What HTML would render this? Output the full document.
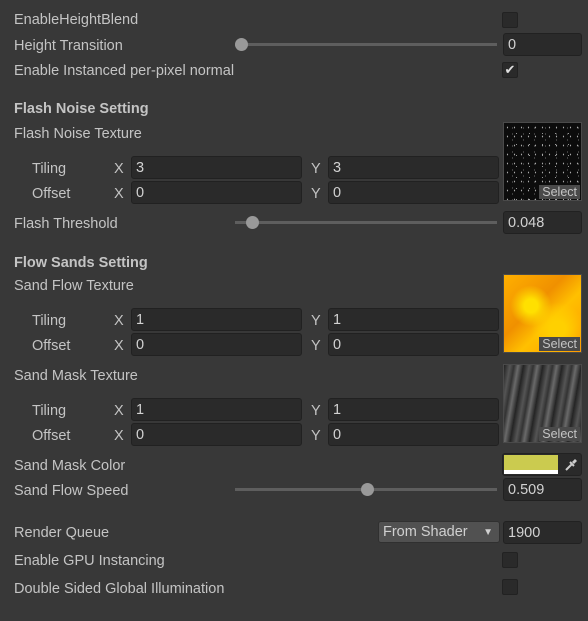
<!DOCTYPE html><html><head><style>
body{margin:0;width:588px;height:621px;background:#383838;overflow:hidden;font-family:"Liberation Sans",sans-serif;font-size:14.5px;color:#c4c4c4;position:relative}
.a{position:absolute;line-height:22px;white-space:nowrap}
.b{font-weight:bold}
.f{position:absolute;background:#2a2a2a;border:1px solid #212121;border-radius:3px;box-sizing:border-box;height:23px;line-height:23px;padding-left:4px;color:#d2d2d2}
.cb{position:absolute;width:16px;height:16px;background:#2a2a2a;border:1px solid #222;border-radius:2px;box-sizing:border-box;left:502px}
.tr{position:absolute;height:3px;background:#5e5e5e;left:235px;width:262px}
.th{position:absolute;width:13px;height:13px;border-radius:50%;background:#999}
.tex{position:absolute;left:503px;width:79px;height:79px;border:1px solid #4a4a4a;box-sizing:border-box;background:#222;overflow:hidden}
.sel{position:absolute;right:1px;bottom:1px;background:#4a4a4a;color:#c4c4c4;font-size:12.5px;line-height:14px;padding:0 3px}
</style></head><body>
<div class="a" style="left:14px;top:9px">EnableHeightBlend</div>
<div class="cb" style="top:12px"></div>
<div class="a" style="left:14px;top:35px">Height Transition</div>
<div class="tr" style="top:43px"></div><div class="th" style="left:235px;top:38px"></div>
<div class="f" style="left:503px;top:33px;width:79px">0</div>
<div class="a" style="left:14px;top:60px">Enable Instanced per-pixel normal</div>
<div class="cb" style="top:62px;color:#e0e0e0;font-size:13px;line-height:14px;text-align:center">✔</div>

<div class="a b" style="left:14px;top:98px">Flash Noise Setting</div>
<div class="a" style="left:14px;top:123px">Flash Noise Texture</div>
<div class="tex" style="top:122px;background:#0c0c0c;background-image:radial-gradient(#aaa 0.5px,transparent 0.8px),radial-gradient(#777 0.5px,transparent 0.8px),radial-gradient(#999 0.5px,transparent 0.8px);background-size:7px 9px,11px 6px,13px 11px;background-position:0 0,3px 2px,6px 5px"><div class="sel">Select</div></div>
<div class="a" style="left:32px;top:158px">Tiling</div><div class="a" style="left:114px;top:158px">X</div>
<div class="f" style="left:131px;top:156px;width:171px">3</div><div class="a" style="left:311px;top:158px">Y</div>
<div class="f" style="left:328px;top:156px;width:171px">3</div>
<div class="a" style="left:32px;top:183px">Offset</div><div class="a" style="left:114px;top:183px">X</div>
<div class="f" style="left:131px;top:181px;width:171px">0</div><div class="a" style="left:311px;top:183px">Y</div>
<div class="f" style="left:328px;top:181px;width:171px">0</div>
<div class="a" style="left:14px;top:213px">Flash Threshold</div>
<div class="tr" style="top:221px"></div><div class="th" style="left:246px;top:216px"></div>
<div class="f" style="left:503px;top:211px;width:79px">0.048</div>

<div class="a b" style="left:14px;top:252px">Flow Sands Setting</div>
<div class="a" style="left:14px;top:275px">Sand Flow Texture</div>
<div class="tex" style="top:274px;background:radial-gradient(circle at 35% 40%,#ffe000 10%,transparent 30%),radial-gradient(circle at 70% 70%,#ffd000 10%,transparent 35%),linear-gradient(135deg,#ffb000,#f09000 40%,#ffc000 60%,#ff9a00)"><div class="sel">Select</div></div>
<div class="a" style="left:32px;top:310px">Tiling</div><div class="a" style="left:114px;top:310px">X</div>
<div class="f" style="left:131px;top:308px;width:171px">1</div><div class="a" style="left:311px;top:310px">Y</div>
<div class="f" style="left:328px;top:308px;width:171px">1</div>
<div class="a" style="left:32px;top:335px">Offset</div><div class="a" style="left:114px;top:335px">X</div>
<div class="f" style="left:131px;top:333px;width:171px">0</div><div class="a" style="left:311px;top:335px">Y</div>
<div class="f" style="left:328px;top:333px;width:171px">0</div>
<div class="a" style="left:14px;top:365px">Sand Mask Texture</div>
<div class="tex" style="top:364px;background:repeating-linear-gradient(100deg,#222 0,#555 6px,#333 10px,#6a6a6a 14px,#2a2a2a 19px)"><div class="sel">Select</div></div>
<div class="a" style="left:32px;top:400px">Tiling</div><div class="a" style="left:114px;top:400px">X</div>
<div class="f" style="left:131px;top:398px;width:171px">1</div><div class="a" style="left:311px;top:400px">Y</div>
<div class="f" style="left:328px;top:398px;width:171px">1</div>
<div class="a" style="left:32px;top:425px">Offset</div><div class="a" style="left:114px;top:425px">X</div>
<div class="f" style="left:131px;top:423px;width:171px">0</div><div class="a" style="left:311px;top:425px">Y</div>
<div class="f" style="left:328px;top:423px;width:171px">0</div>
<div class="a" style="left:14px;top:455px">Sand Mask Color</div>
<div style="position:absolute;left:502px;top:453px;width:80px;height:23px;background:#2a2a2a;border-radius:3px;border:1px solid #222;box-sizing:border-box">
<div style="position:absolute;left:1px;top:1px;width:54px;height:15px;background:#cbcb4f"></div>
<div style="position:absolute;left:1px;top:16px;width:54px;height:4px;background:#fff"></div>
<svg style="position:absolute;left:61px;top:3px" width="14" height="15" viewBox="0 0 14 15"><path d="M2 13 L8 7 M6 5 L10 9" stroke="#ccc" stroke-width="2"/><path d="M8 5 L11 2 L13 4 L10 7 Z" fill="#ccc"/></svg></div>
<div class="a" style="left:14px;top:480px">Sand Flow Speed</div>
<div class="tr" style="top:488px"></div><div class="th" style="left:361px;top:483px"></div>
<div class="f" style="left:503px;top:478px;width:79px">0.509</div>

<div class="a" style="left:14px;top:522px">Render Queue</div>
<div style="position:absolute;left:378px;top:521px;width:122px;height:22px;background:#515151;border:1px solid #303030;border-radius:3px;box-sizing:border-box;line-height:21px;padding-left:4px;color:#d0d0d0">From Shader<span style="position:absolute;right:6px;top:0;font-size:10px">▼</span></div>
<div class="f" style="left:503px;top:521px;width:79px">1900</div>
<div class="a" style="left:14px;top:550px">Enable GPU Instancing</div>
<div class="cb" style="top:552px"></div>
<div class="a" style="left:14px;top:578px">Double Sided Global Illumination</div>
<div class="cb" style="top:579px"></div>
</body></html>
